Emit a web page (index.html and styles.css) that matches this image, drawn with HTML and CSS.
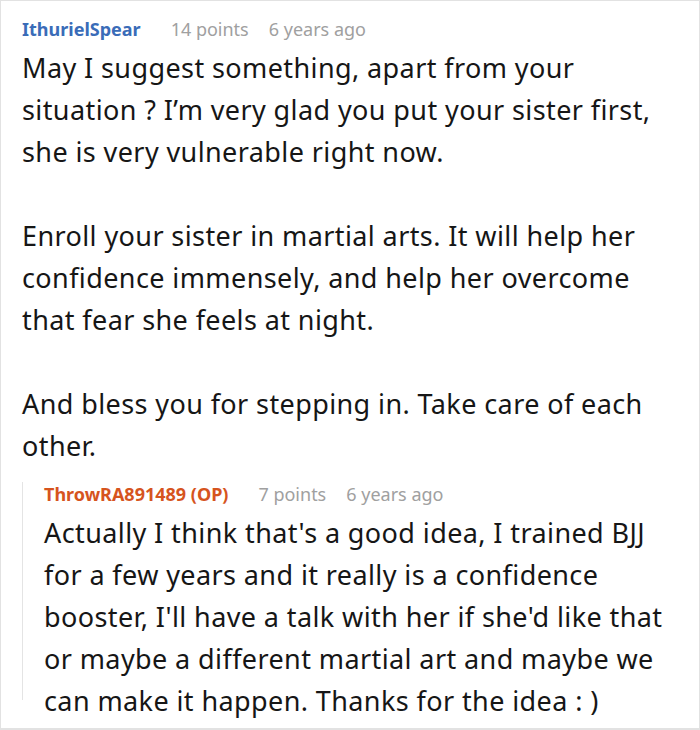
FILE: index.html
```html
<!DOCTYPE html>
<html>
<head>
<meta charset="utf-8">
<link rel="stylesheet" href="styles.css">
</head>
<body>
<div class="thread">
  <div class="comment">
    <div class="meta">
      <span class="author">IthurielSpear</span>
      <span class="info">14 points</span>
      <span class="info">6 years ago</span>
    </div>
    <div class="body">
      <p>May I suggest something, apart from your<br>situation ? I’m very glad you put your sister first,<br>she is very vulnerable right now.</p>
      <p>Enroll your sister in martial arts. It will help her<br>confidence immensely, and help her overcome<br>that fear she feels at night.</p>
      <p>And bless you for stepping in. Take care of each<br>other.</p>
    </div>
  </div>
  <div class="reply">
    <div class="meta">
      <span class="author op">ThrowRA891489 (OP)</span>
      <span class="info">7 points</span>
      <span class="info">6 years ago</span>
    </div>
    <div class="body">
      <p>Actually I think that's a good idea, I trained BJJ<br>for a few years and it really is a confidence<br>booster, I'll have a talk with her if she'd like that<br>or maybe a different martial art and maybe we<br>can make it happen. Thanks for the idea : )</p>
    </div>
  </div>
</div>
</body>
</html>
```

FILE: styles.css
```css
html, body {
  margin: 0;
  padding: 0;
  background: #fff;
}
.thread {
  box-sizing: border-box;
  width: 700px;
  height: 730px;
  border: 1px solid #e2e2e2;
  border-bottom-width: 2px;
  padding: 16px 4px 0 21px;
  font-family: "Noto Sans", "Open Sans", sans-serif;
  color: #161616;
  overflow: hidden;
}
.meta {
  display: flex;
  align-items: baseline;
  line-height: 24px;
  height: 24px;
  font-size: 18px;
}
.author {
  font-weight: 700;
  color: #3a6cb8;
  margin-right: 30px;
}
.author.op {
  color: #d6541e;
}
.info {
  color: #a0a0a0;
  margin-right: 20px;
}
.body {
  margin-top: 6px;
  font-size: 27px;
  line-height: 42px;
  letter-spacing: 0.4px;
  white-space: nowrap;
}
.body p {
  margin: 0 0 42px 0;
}
.body p:last-child {
  margin-bottom: 0;
}
.reply {
  margin-top: 26px;
  height: 218px;
  border-left: 1px solid #e4e4e4;
  padding-left: 21px;
}
.reply .meta {
  margin-top: -11px;
}
.reply .body {
  margin-top: 6px;
}
```
